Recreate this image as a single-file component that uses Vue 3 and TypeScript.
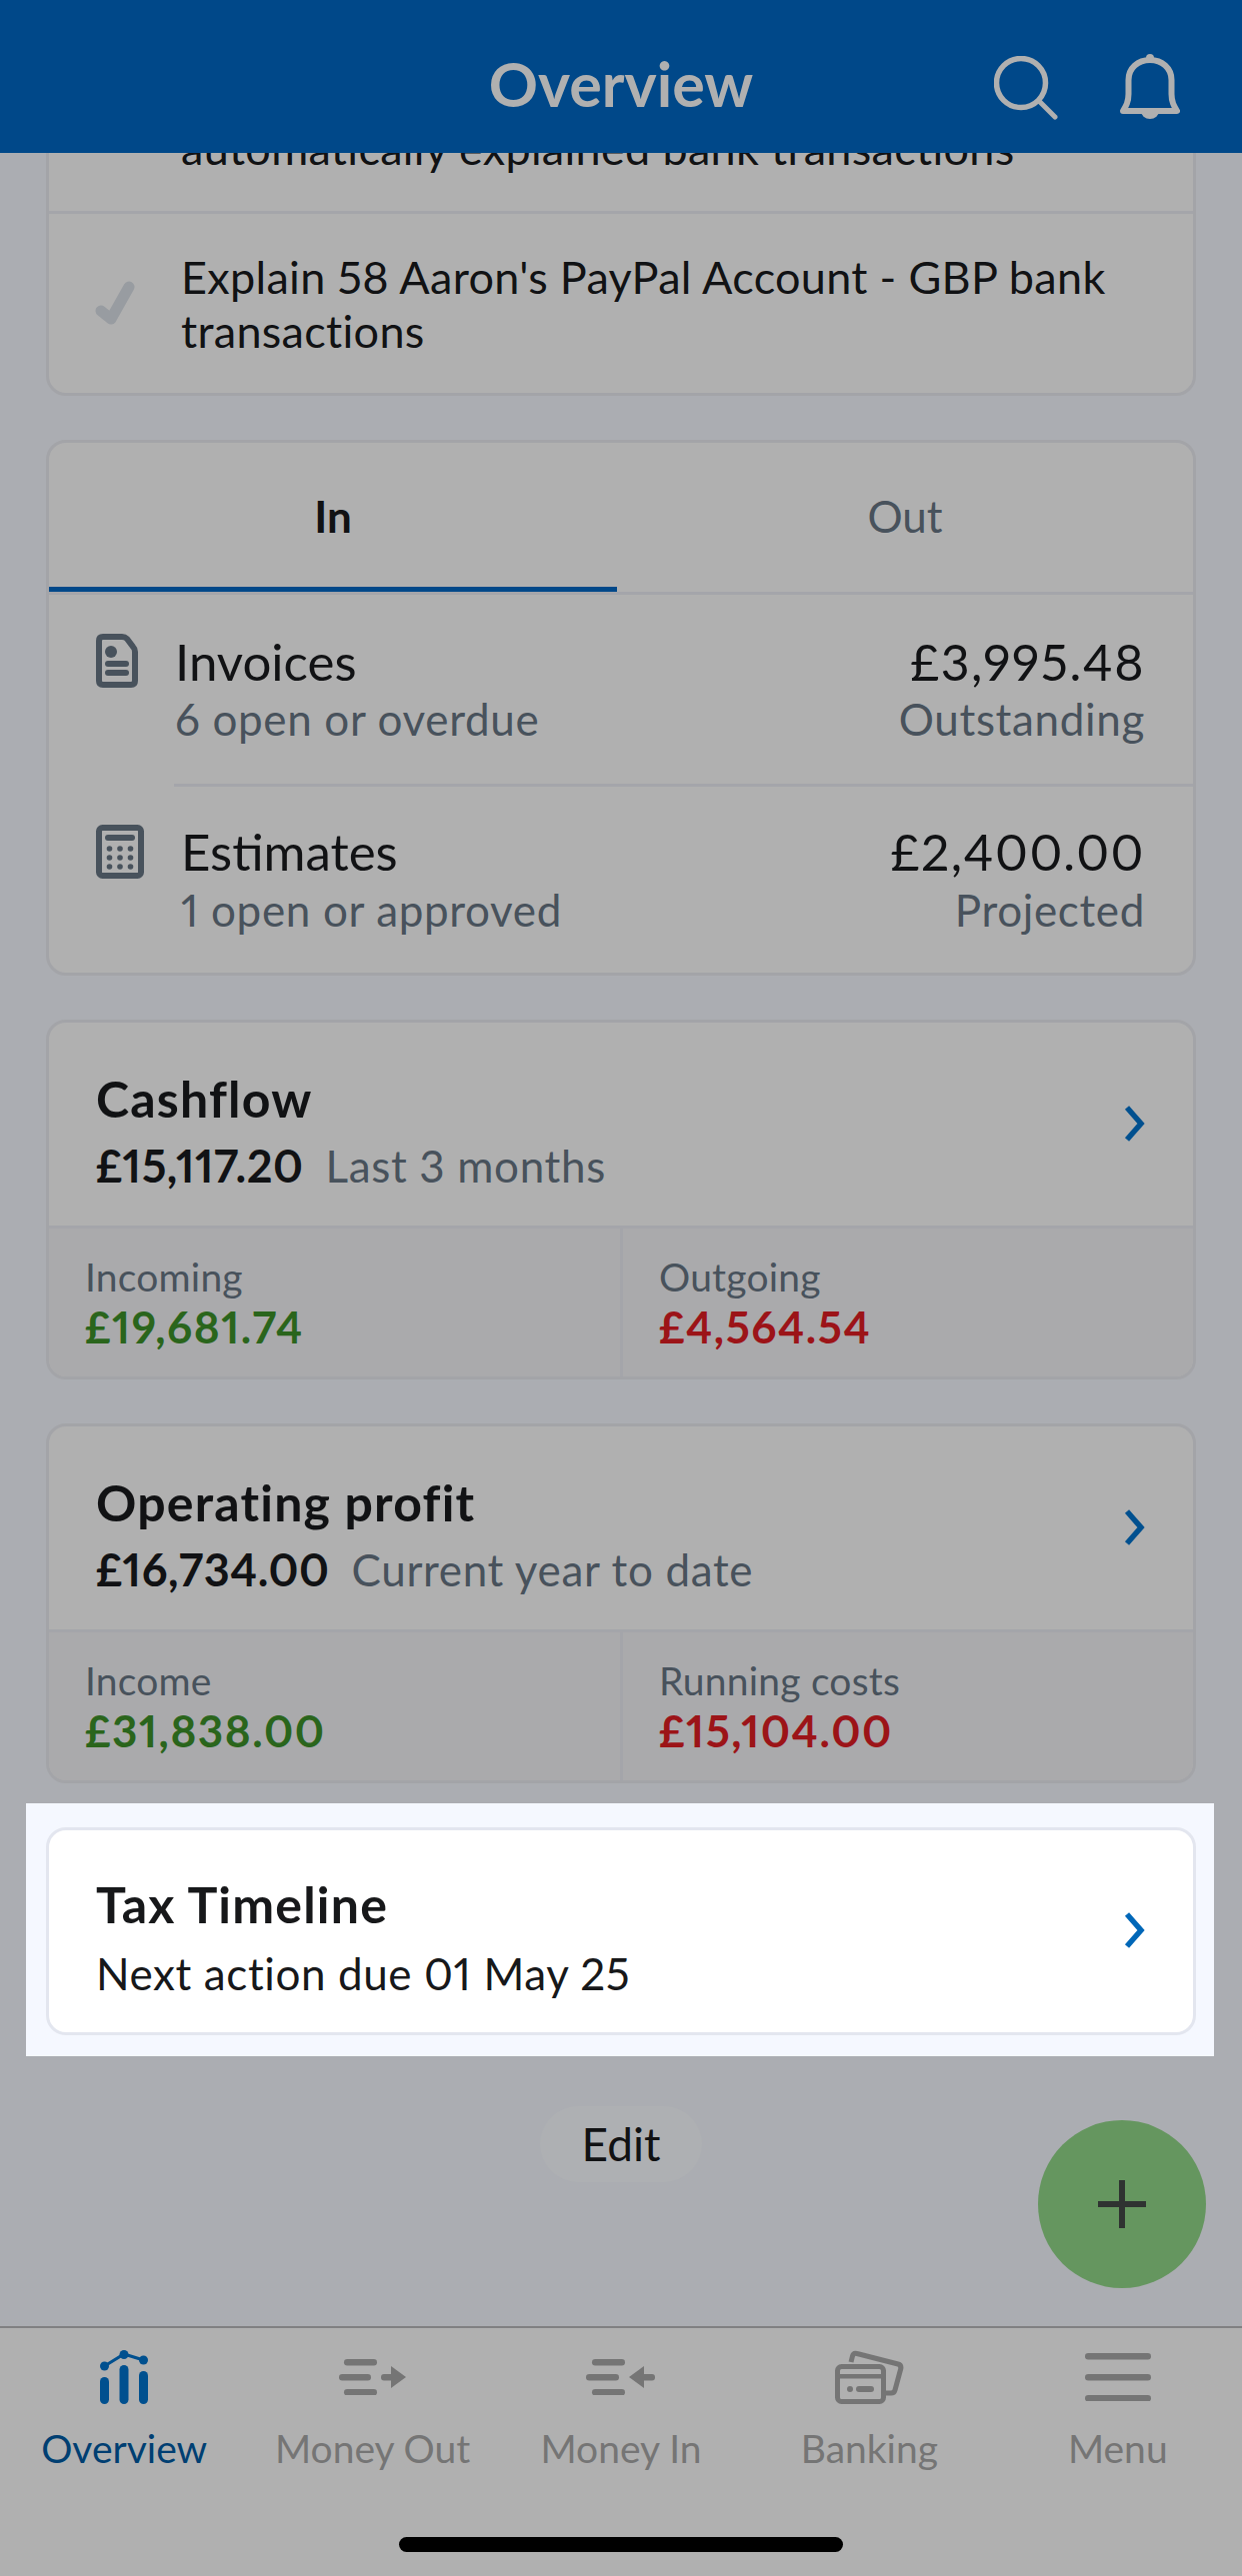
<script setup lang="ts">
interface Stat { label: string; value: string; tone: 'good' | 'bad' }
interface Metric { title: string; amount: string; period: string; stats: Stat[] }

const metrics: Metric[] = [
  {
    title: 'Cashflow', amount: '£15,117.20', period: 'Last 3 months',
    stats: [
      { label: 'Incoming', value: '£19,681.74', tone: 'good' },
      { label: 'Outgoing', value: '£4,564.54', tone: 'bad' },
    ],
  },
  {
    title: 'Operating profit', amount: '£16,734.00', period: 'Current year to date',
    stats: [
      { label: 'Income', value: '£31,838.00', tone: 'good' },
      { label: 'Running costs', value: '£15,104.00', tone: 'bad' },
    ],
  },
]
</script>

<template>
  <div class="app">
    <header class="topbar">
      <h1 class="title">Overview</h1>
      <div class="top-icons">
        <svg class="ic-search" width="64" height="64" viewBox="0 0 64 64" fill="none" stroke="#b0b0b0" stroke-width="5.5" stroke-linecap="round">
          <circle cx="27" cy="27" r="24.5" />
          <path d="M45 45 L61 61" stroke-width="5" />
        </svg>
        <svg class="ic-bell" width="60" height="65" viewBox="0 0 60 65" fill="#b0b0b0" stroke="#b0b0b0">
          <path fill="none" stroke-width="6" stroke-linejoin="round" d="M8.5 26 C8.5 14 18 6 30 6 C42 6 51.5 14 51.5 26 V40 C51.5 48 54 52 57 57 H3 C6 52 8.5 48 8.5 40 Z" />
          <circle cx="30" cy="4" r="4" stroke="none" />
          <path stroke="none" d="M21 57 a9 8 0 0 0 18 0 z" />
        </svg>
      </div>
    </header>

    <main class="content">
      <div class="stack">
        <section class="card tasks">
          <div class="task task-first">
            <p class="task-text">automatically explained bank transactions</p>
          </div>
          <div class="task task-second">
            <svg class="ic-check" width="40" height="46" viewBox="0 0 40 46" fill="none" stroke="#989ca1" stroke-width="11" stroke-linecap="round" stroke-linejoin="round">
              <path d="M6 30 L16 38 L34 6" />
            </svg>
            <p class="task-text">Explain 58 Aaron's PayPal Account - GBP bank transactions</p>
          </div>
        </section>

        <section class="card flows">
          <div class="tabs">
            <div class="tab tab-on">In</div>
            <div class="tab">Out</div>
          </div>
          <div class="flow flow-invoices">
            <svg class="flow-icon" width="42" height="54" viewBox="0 0 42 54">
              <path fill="none" stroke="#48525c" stroke-width="6" stroke-linejoin="round" d="M7 3 H26 Q29 3 31 5 L37 13 Q39 15 39 18 V47 Q39 51 35 51 H7 Q3 51 3 47 V7 Q3 3 7 3 Z" />
              <circle cx="15" cy="18" r="6" fill="#48525c" />
              <rect x="9" y="27" width="24" height="6" rx="3" fill="#48525c" />
              <rect x="9" y="36" width="24" height="6" rx="3" fill="#48525c" />
            </svg>
            <div class="flow-left">
              <div class="flow-name">Invoices</div>
              <div class="flow-sub">6 open or overdue</div>
            </div>
            <div class="flow-right">
              <div class="flow-amount">£3,995.48</div>
              <div class="flow-sub">Outstanding</div>
            </div>
          </div>
          <div class="flow flow-estimates">
            <svg class="flow-icon" width="48" height="54" viewBox="0 0 48 54" fill="#48525c">
              <rect x="3" y="3" width="42" height="48" rx="3.5" fill="none" stroke="#48525c" stroke-width="6" />
              <rect x="9" y="10" width="30" height="6" rx="3" />
              <circle cx="13.500" cy="24" r="2.800" /><circle cx="24" cy="24" r="2.800" /><circle cx="34.500" cy="24" r="2.800" />
              <circle cx="13.500" cy="33" r="2.800" /><circle cx="24" cy="33" r="2.800" /><circle cx="34.500" cy="33" r="2.800" />
              <circle cx="13.500" cy="42" r="2.800" /><circle cx="24" cy="42" r="2.800" /><circle cx="34.500" cy="42" r="2.800" />
            </svg>
            <div class="flow-left">
              <div class="flow-name">Estimates</div>
              <div class="flow-sub">1 open or approved</div>
            </div>
            <div class="flow-right">
              <div class="flow-amount">£2,400.00</div>
              <div class="flow-sub">Projected</div>
            </div>
          </div>
        </section>

        <section v-for="m in metrics" :key="m.title" class="card metric">
          <div class="metric-head">
            <div class="metric-text">
              <div class="metric-title">{{ m.title }}</div>
              <div class="metric-line">
                <span class="metric-amount">{{ m.amount }}</span>
                <span class="metric-period">{{ m.period }}</span>
              </div>
            </div>
            <svg class="chevron" width="21" height="36" viewBox="0 0 21 36" fill="none" stroke="#00508f" stroke-width="5.500">
              <path d="M3 2 L17 18 L3 34" />
            </svg>
          </div>
          <div class="stats">
            <div v-for="s in m.stats" :key="s.label" class="stat">
              <div class="stat-label">{{ s.label }}</div>
              <div class="stat-value" :class="s.tone">{{ s.value }}</div>
            </div>
          </div>
        </section>

        <div class="spotlight">
          <section class="card timeline">
            <div class="metric-text">
              <div class="metric-title timeline-title">Tax Timeline</div>
              <div class="timeline-sub">Next action due 01 May 25</div>
            </div>
            <svg class="chevron" width="21" height="36" viewBox="0 0 21 36" fill="none" stroke="#0067b8" stroke-width="5.500">
              <path d="M3 2 L17 18 L3 34" />
            </svg>
          </section>
        </div>

        <div class="edit-row">
          <button class="edit" type="button">Edit</button>
        </div>
      </div>
    </main>

    <button class="fab" type="button" aria-label="Add">
      <svg width="48" height="48" viewBox="0 0 48 48" fill="#2f3331">
        <rect x="21" y="0" width="6" height="48" />
        <rect x="0" y="21" width="48" height="6" />
      </svg>
    </button>

    <nav class="nav">
      <div class="nav-item nav-on">
        <div class="nav-icon">
          <svg width="48" height="54" viewBox="0 0 48 54" fill="#00508f">
            <rect x="0" y="27" width="9" height="27" rx="4.500" />
            <rect x="19.500" y="15" width="9" height="39" rx="4.500" />
            <rect x="39" y="21" width="9" height="33" rx="4.500" />
            <path d="M4.500 16 L24 4 L43.500 10" fill="none" stroke="#00508f" stroke-width="3" />
            <circle cx="4.500" cy="16" r="4.500" /><circle cx="24" cy="4.500" r="4.500" /><circle cx="43.500" cy="10" r="4.500" />
          </svg>
        </div>
        <span>Overview</span>
      </div>
      <div class="nav-item">
        <div class="nav-icon">
          <svg width="67" height="36" viewBox="0 0 67 36" fill="#757575">
            <rect x="5" y="0" width="33" height="6.500" rx="3.200" />
            <rect x="0" y="15" width="32" height="6.500" rx="3.200" />
            <rect x="5" y="30" width="33" height="6.500" rx="3.200" />
            <rect x="42" y="15" width="14" height="6.500" rx="3" />
            <path d="M52 7 L67 18 L52 29 Z" />
          </svg>
        </div>
        <span>Money Out</span>
      </div>
      <div class="nav-item">
        <div class="nav-icon">
          <svg width="69" height="36" viewBox="0 0 69 36" fill="#757575">
            <rect x="6" y="0" width="33" height="6.500" rx="3.200" />
            <rect x="0" y="15" width="33" height="6.500" rx="3.200" />
            <rect x="6" y="30" width="33" height="6.500" rx="3.200" />
            <rect x="55" y="15" width="14" height="6.500" rx="3" />
            <path d="M58 7 L43 18 L58 29 Z" />
          </svg>
        </div>
        <span>Money In</span>
      </div>
      <div class="nav-item">
        <div class="nav-icon">
          <svg width="69" height="54" viewBox="0 0 69 54" fill="none" stroke="#757575">
            <path stroke-width="5" stroke-linejoin="round" d="M16 12 L17.500 6 Q18.500 2.500 22 3.500 L63 14 Q66.500 15 65.800 18.500 L60 40 Q59 43.500 55 43 H51" />
            <rect x="2.500" y="16.500" width="46" height="35" rx="4" stroke-width="5" />
            <rect x="3" y="24" width="45" height="4.500" fill="#757575" stroke="none" />
            <circle cx="15" cy="39" r="3" fill="#757575" stroke="none" />
            <rect x="21" y="36" width="18" height="6" rx="3" fill="#757575" stroke="none" />
          </svg>
        </div>
        <span>Banking</span>
      </div>
      <div class="nav-item">
        <div class="nav-icon">
          <svg width="66" height="48" viewBox="0 0 66 48" fill="#757575">
            <rect x="0" y="0" width="66" height="6.500" rx="3.200" />
            <rect x="0" y="21" width="66" height="6.500" rx="3.200" />
            <rect x="0" y="42" width="66" height="6.500" rx="3.200" />
          </svg>
        </div>
        <span>Menu</span>
      </div>
      <div class="home-bar"></div>
    </nav>
  </div>
</template>

<style>
html, body { margin: 0; padding: 0; }
</style>

<style scoped>
.app {
  width: 1242px;
  height: 2577px;
  position: relative;
  display: flex;
  flex-direction: column;
  overflow: hidden;
  background: #abadb2;
  font-family: Lato, "Noto Sans", sans-serif;
  font-variant-numeric: proportional-nums;
  color: #111214;
}
.topbar {
  height: 153px;
  flex: none;
  background: #004889;
  position: relative;
  display: flex;
  align-items: center;
  justify-content: center;
  z-index: 2;
}
.title {
  margin: 0;
  font-size: 61px;
  font-weight: 700;
  color: #b0b0b0;
  line-height: 1;
  padding-top: 14px;
}
.top-icons {
  position: absolute;
  left: 994px;
  top: 54px;
  display: flex;
  align-items: flex-start;
  gap: 62px;
}
.ic-search { margin-top: 2px; }
.content {
  flex: 1;
  min-height: 0;
  overflow: hidden;
  padding: 0 46px;
}
.stack {
  display: flex;
  flex-direction: column;
  gap: 44px;
  margin-top: -35px;
}
.card {
  background: #b0b0b0;
  border: 3px solid #a3a4a8;
  border-radius: 20px;
  overflow: hidden;
}
.tasks { flex: none; }
.task { display: flex; align-items: center; }
.task-text {
  margin: 0;
  font-size: 45px;
  line-height: 54px;
  letter-spacing: 0.3px;
}
.task-first {
  padding: 0 60px 36px 132px;
  border-bottom: 3px solid #a4a5aa;
}
.task-second { padding: 36px 40px 35px 46px; gap: 46px; }
.ic-check { flex: none; }
.tabs {
  display: grid;
  grid-template-columns: 568px 1fr;
  height: 149px;
  border-bottom: 3px solid #a4a5aa;
}
.tab {
  display: flex;
  align-items: center;
  justify-content: center;
  font-size: 44px;
  color: #48525c;
  padding-bottom: 3px;
}
.tab-on {
  font-weight: 700;
  color: #111214;
  box-shadow: inset 0 -5px 0 #004889;
}
.flow {
  display: flex;
  align-items: flex-start;
}
.flow-invoices { padding: 39px 48px 40px 47px; position: relative; }
.flow-invoices::after {
  content: "";
  position: absolute;
  left: 125px;
  right: 0;
  bottom: 0;
  height: 3px;
  background: #a4a5aa;
}
.flow-estimates { padding: 37px 48px 35px 47px; }
.flow-icon { flex: none; margin-top: 1px; }
.flow-invoices .flow-icon { margin-top: 0; }
.flow-invoices .flow-left { margin-left: 37px; }
.flow-estimates .flow-left { margin-left: 37px; }
.flow-estimates .flow-sub { margin-top: 2px; }
.flow-left { flex: 1; }
.flow-right { text-align: right; }
.flow-name { font-size: 51px; line-height: 56px; }
.flow-amount { font-size: 50px; line-height: 56px; letter-spacing: 1.5px; }
.flow-sub { font-size: 44px; line-height: 56px; margin-top: 1px; letter-spacing: 0.65px; color: #48525c; }
.metric { height: 360px; box-sizing: border-box; display: flex; flex-direction: column; }
.metric-head {
  flex: 1;
  display: flex;
  align-items: center;
  justify-content: space-between;
  padding: 0 48px 0 47px;
  border-bottom: 3px solid #a4a5aa;
}
.chevron { margin-top: -2px; }
.metric-text { padding-top: 14px; }
.metric-title {
  font-size: 50px;
  font-weight: 700;
  line-height: 56px;
  letter-spacing: 1.2px;
}
.metric-line {
  display: flex;
  align-items: baseline;
  gap: 22px;
  margin-top: 12px;
  line-height: 54px;
}
.metric-amount { font-size: 45px; font-weight: 700; letter-spacing: 0.5px; }
.metric-period { font-size: 44px; letter-spacing: 0.65px; color: #48525c; }
.stats {
  height: 148px;
  flex: none;
  display: grid;
  grid-template-columns: 571px 1fr;
  background: #aaaaac;
}
.stat { padding: 23px 0 0 36px; }
.stat + .stat { border-left: 3px solid #a4a5aa; }
.stat-label { font-size: 39px; line-height: 50px; letter-spacing: 0.2px; color: #48525c; }
.stat-value { font-size: 44px; line-height: 50px; font-weight: 700; letter-spacing: 1.5px; }
.good { color: #2a651c; }
.bad { color: #9c1418; }
.spotlight {
  margin: -24px -18px -21px -20px;
  padding: 24px 18px 21px 20px;
  background: #f5f8ff;
}
.timeline {
  background: #fff;
  border-color: #e3e6ef;
  box-sizing: border-box;
  height: 208px;
  display: flex;
  align-items: center;
  justify-content: space-between;
  padding: 0 48px 0 47px;
}
.timeline-title { color: #17181a; }
.timeline-sub { font-size: 44px; line-height: 54px; margin-top: 14px; letter-spacing: 0.6px; color: #17181a; }
.edit-row {
  display: flex;
  justify-content: center;
  margin-top: 27px;
}
.edit {
  width: 162px;
  height: 76px;
  border: none;
  border-radius: 38px;
  background: #aeb0b3;
  font: inherit;
  font-size: 46px;
  color: #111214;
  padding: 0 0 2px;
}
.fab {
  position: absolute;
  left: 1038px;
  top: 2121px;
  width: 168px;
  height: 168px;
  border: none;
  border-radius: 50%;
  background: #65965f;
  display: flex;
  align-items: center;
  justify-content: center;
  padding: 0;
}
.nav {
  height: 250px;
  flex: none;
  box-sizing: border-box;
  position: relative;
  border-top: 2px solid #808082;
  background: #b0b0b0;
  display: grid;
  grid-template-columns: repeat(5, 1fr);
}
.nav-item {
  display: flex;
  flex-direction: column;
  align-items: center;
  color: #757575;
  font-size: 39px;
  line-height: 46px;
}
.nav-on { color: #003f72; }
.nav-icon {
  height: 96px;
  display: flex;
  align-items: center;
  justify-content: center;
  margin-top: 1px;
}
.home-bar {
  position: absolute;
  left: 399px;
  top: 209px;
  width: 444px;
  height: 15px;
  border-radius: 8px;
  background: #000;
}
</style>
